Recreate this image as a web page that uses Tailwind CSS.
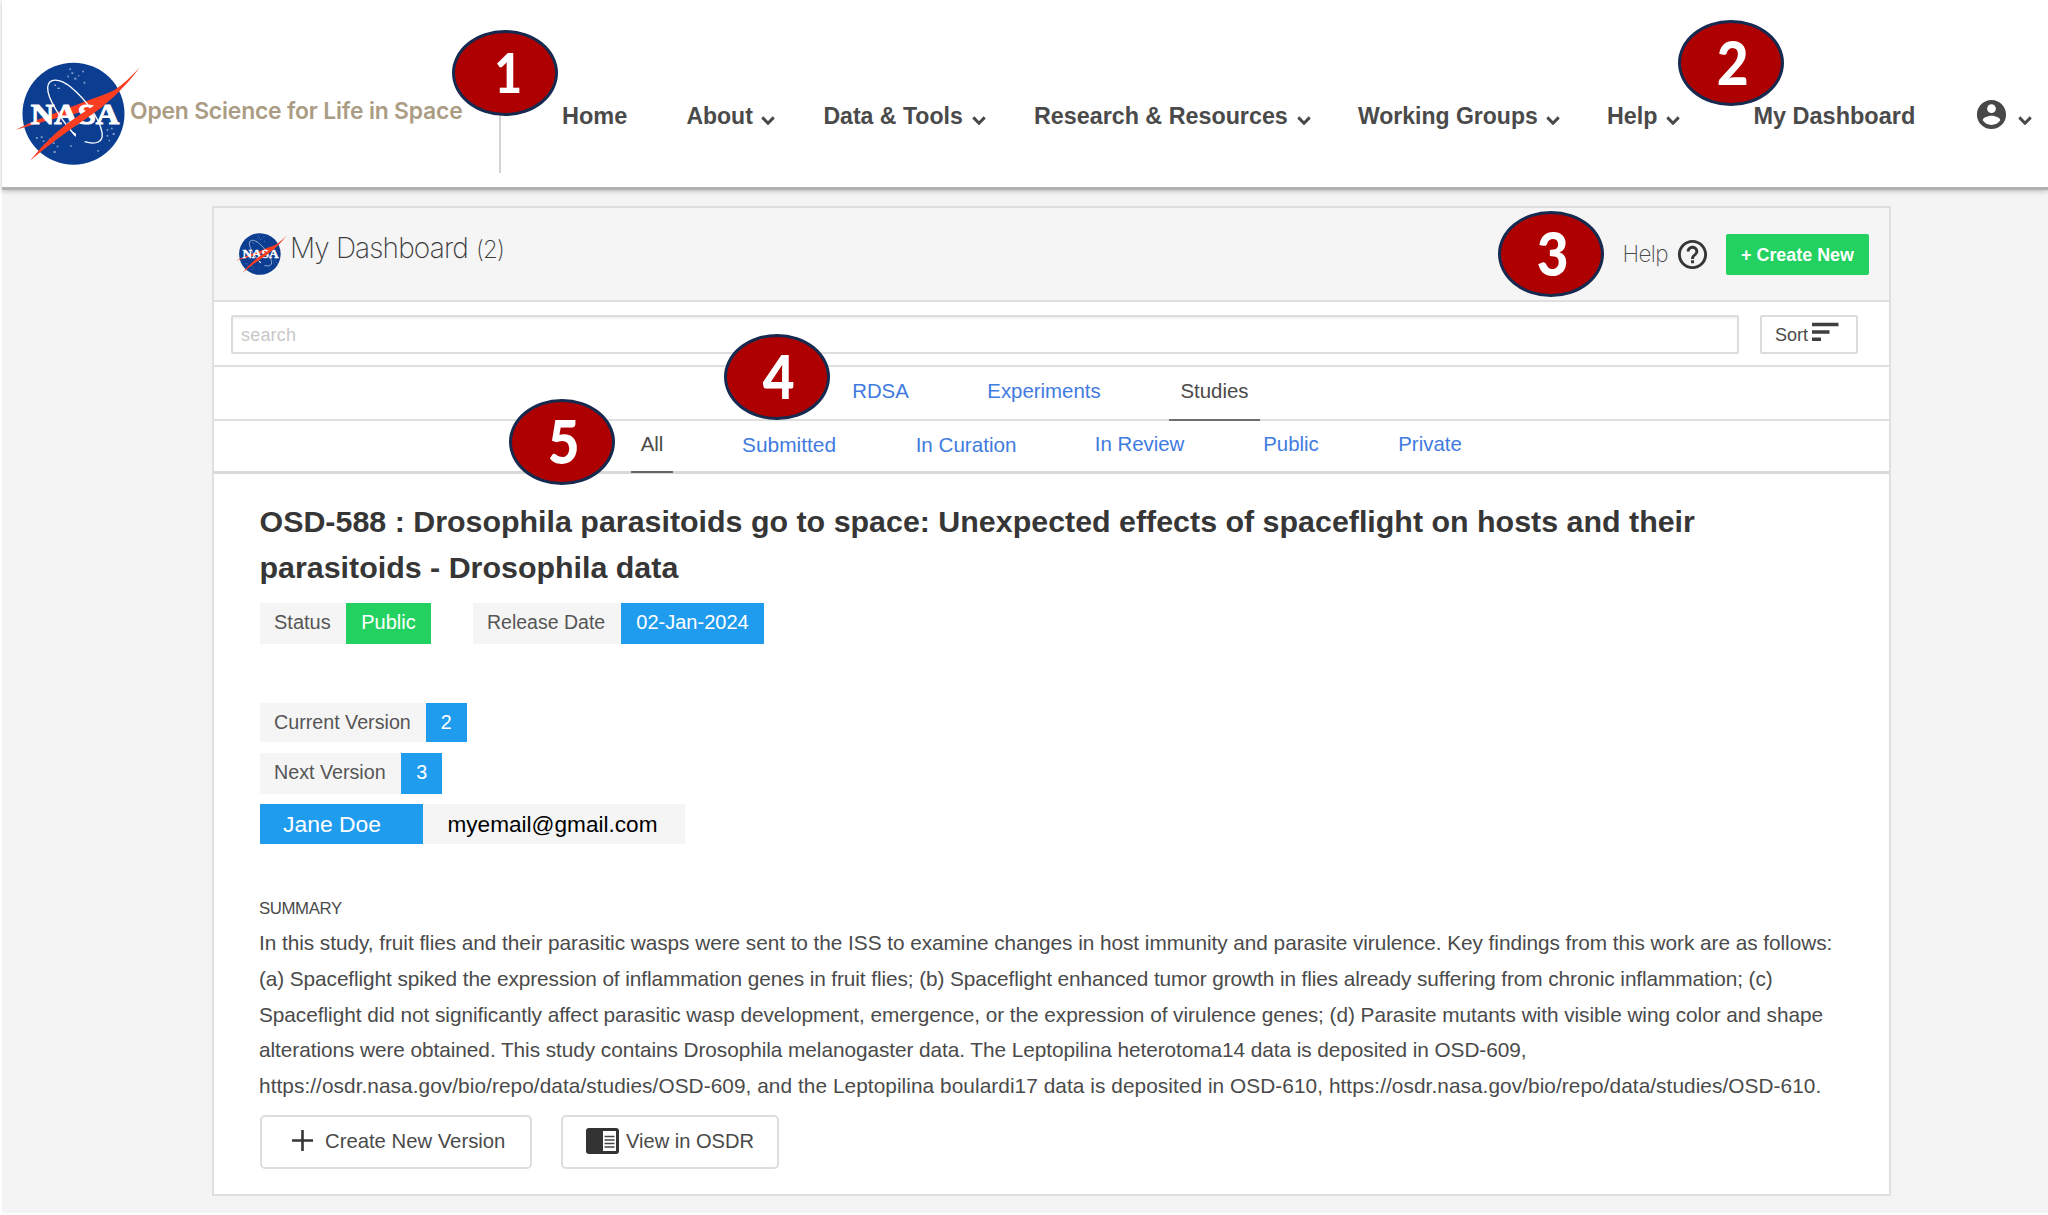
<!DOCTYPE html>
<html lang="en">
<head>
<meta charset="utf-8">
<title>My Dashboard</title>
<script src="https://cdn.jsdelivr.net/npm/@tailwindcss/browser@4"></script>
</head>
<body class="relative h-[1215px] w-[2048px] overflow-hidden bg-white pl-[2px] font-['Liberation_Sans',Arial,sans-serif] text-[#4a4a4a]">

<!-- Shared symbols -->
<svg class="hidden">
  <symbol id="nasa" viewBox="0 0 405 345">
    <circle cx="190.5" cy="176" r="153" fill="#0b3d91"/>
    <g fill="#fff" opacity=".5">
      <rect x="178" y="40" width="5" height="5"/><rect x="184" y="52" width="6" height="5"/><rect x="217" y="47" width="5" height="5"/><rect x="172" y="62" width="5" height="5"/><rect x="193" y="68" width="6" height="6"/><rect x="204" y="60" width="4" height="4"/><rect x="221" y="80" width="5" height="6"/><rect x="133" y="88" width="5" height="5"/><rect x="142" y="98" width="8" height="4"/><rect x="165" y="84" width="5" height="5"/>
      <rect x="78" y="246" width="5" height="6"/><rect x="92" y="244" width="6" height="5"/><rect x="98" y="256" width="5" height="5"/><rect x="118" y="250" width="4" height="5"/><rect x="128" y="262" width="6" height="5"/><rect x="140" y="272" width="5" height="5"/><rect x="131" y="288" width="6" height="6"/><rect x="181" y="270" width="4" height="6"/><rect x="290" y="222" width="5" height="5"/><rect x="303" y="218" width="5" height="5"/><rect x="290" y="240" width="5" height="5"/><rect x="308" y="234" width="6" height="6"/><rect x="296" y="254" width="4" height="5"/><rect x="262" y="285" width="5" height="5"/>
    </g>
    <path d="M389 38 Q350 92 285 118 Q245 132 214 144 L110 184 Q60 202 16 225 Q70 208 130 192 L236 166 Q330 118 389 38Z" fill="#fc3d21"/>
    <path d="M196 242 C150 190 112 130 113 98 C115 66 150 70 182 96 C228 134 268 190 276 232 C281 262 258 270 224 260" fill="none" stroke="#fff" stroke-width="4"/>
    <path d="M178 224 L198 236 L197 246 Z" fill="#fff"/>
    <text x="62" y="206" font-family="Liberation Serif, serif" font-weight="700" font-size="86" textLength="266" lengthAdjust="spacingAndGlyphs" fill="#fff" stroke="#fff" stroke-width="3">NASA</text>
    <path d="M389 38 Q320 130 230 190 Q140 250 60 317 Q130 228 214 176 Q320 112 389 38Z" fill="#fc3d21"/>
  </symbol>
  <symbol id="chev" viewBox="0 0 14 9"><path d="M1.3 1.4 7 7.2 12.7 1.4" fill="none" stroke="#484848" stroke-width="3"/></symbol>
</svg>

<header class="relative flex h-[190px] items-center border-b-[3px] border-[#b0b2b1] bg-white pt-[45px] text-[23px] font-bold text-[#4a4a4a] shadow-[0_1px_5px_rgba(0,0,0,0.25)]">
  <div class="mt-[-7px] ml-[8px] flex w-[489px] items-center">
    <svg class="h-[115px] w-[135px] shrink-0"><use href="#nasa"/></svg>
    <span class="-ml-[15px] mt-[-3px] whitespace-nowrap font-[Inter,sans-serif] text-[22.9px] font-semibold tracking-[-0.2px] text-[#ab9c84]">Open Science for Life in Space</span>
  </div>
  <div class="-mt-[1px] h-[114px] w-[63px] shrink-0 border-l-[2px] border-[#d3d3d3]"></div>
  <nav class="flex items-center whitespace-nowrap leading-[30px]">
    <a class="w-[124.4px] text-[23.5px]">Home</a>
    <a class="flex w-[137px] items-center gap-[8px]">About<svg class="mt-[9px] h-[9px] w-[14px]"><use href="#chev"/></svg></a>
    <a class="flex w-[210.6px] items-center gap-[9px] text-[23.1px]">Data &amp; Tools<svg class="mt-[9px] h-[9px] w-[14px]"><use href="#chev"/></svg></a>
    <a class="flex w-[324px] items-center gap-[9px] text-[23.3px]">Research &amp; Resources<svg class="mt-[9px] h-[9px] w-[14px]"><use href="#chev"/></svg></a>
    <a class="flex w-[249px] items-center gap-[8px]">Working Groups<svg class="mt-[9px] h-[9px] w-[14px]"><use href="#chev"/></svg></a>
    <a class="flex w-[146.4px] items-center gap-[9px] text-[23.3px]">Help<svg class="mt-[9px] h-[9px] w-[14px]"><use href="#chev"/></svg></a>
    <a class="w-[224px] text-[23.5px]">My Dashboard</a>
    <a class="flex items-center gap-[12px]">
      <svg class="-mt-[4px] -mr-[3px] -ml-[3px] h-[35px] w-[35px]" viewBox="0 0 24 24" fill="#484848"><path d="M12 2C6.48 2 2 6.48 2 12s4.48 10 10 10 10-4.48 10-10S17.52 2 12 2zm0 3c1.66 0 3 1.34 3 3s-1.34 3-3 3-3-1.34-3-3 1.34-3 3-3zm0 14.200c-2.500 0-4.710-1.280-6-3.220.03-1.990 4-3.080 6-3.080 1.990 0 5.970 1.090 6 3.080-1.290 1.940-3.500 3.220-6 3.220z"/></svg>
      <svg class="mt-[9px] h-[9px] w-[14px]"><use href="#chev"/></svg>
    </a>
  </nav>
</header>

<div class="h-[1023px] bg-[#f4f4f4] pt-[16px] pl-[210px]">
  <main class="flex h-[990px] w-[1679px] flex-col border-2 border-[#dfdfdf] bg-white">

    <div class="flex h-[94px] shrink-0 items-center border-b-2 border-[#dfdfdf] bg-[#f5f5f5] pl-[20px] pr-[20px]">
      <svg class="-mt-[2px] h-[47px] w-[55px]"><use href="#nasa"/></svg>
      <h1 class="-mt-[10px] ml-[1px] font-[Inter,sans-serif] text-[28px] font-extralight leading-[40px] tracking-[-0.85px] text-[#3c3c3c]">My Dashboard <span class="ml-[1px] text-[24px]">(2)</span></h1>
      <span class="ml-auto font-[Inter,sans-serif] text-[22.5px] font-extralight tracking-[-0.6px] text-[#4a4a4a]">Help</span>
      <svg class="ml-[7px] h-[35px] w-[35px]" viewBox="0 0 24 24" fill="#363636"><path d="M11 18h2v-2h-2v2zm1-16C6.480 2 2 6.480 2 12s4.480 10 10 10 10-4.480 10-10S17.520 2 12 2zm0 18c-4.410 0-8-3.590-8-8s3.590-8 8-8 8 3.590 8 8-3.590 8-8 8zm0-14c-2.210 0-4 1.790-4 4h2c0-1.100.9-2 2-2s2 .9 2 2c0 2-3 1.750-3 5h2c0-2.250 3-2.500 3-5 0-2.210-1.790-4-4-4z"/></svg>
      <button class="ml-[16px] h-[41px] w-[143px] rounded-[2px] bg-[#23d160] pt-[2px] text-[17.900px] font-bold text-white">+ Create New</button>
    </div>

    <div class="flex h-[65px] shrink-0 items-start gap-[21px] border-b-2 border-[#dfdfdf] pt-[13px] pl-[17px]">
      <div class="h-[39px] w-[1508px] rounded-[2px] border-2 border-[#dcdcdc] pl-[8px] text-[18px] leading-[37px] tracking-[0.200px] text-[#c8c8c8] shadow-[inset_0_2px_2px_rgba(10,10,10,0.05)]">search</div>
      <div class="flex h-[39px] w-[98px] rounded-[2px] border-2 border-[#dcdcdc] pl-[13px] text-[18px] leading-[37px]">Sort
        <svg class="mt-[5px] ml-[4px] h-[20px] w-[27px]" viewBox="0 0 27 20" fill="#3f3f3f"><path d="M0 .8h26.500v3.500H0zM0 8.200h17.500v3.500H0zM0 15.600h9v3.500H0z"/></svg>
      </div>
    </div>

    <div class="flex h-[54px] shrink-0 gap-[57px] border-b-2 border-[#dfdfdf] pl-[627px] text-center text-[20.4px] leading-[49px] text-[#3f7be0]">
      <a class="w-[78px] pl-[1px]">RDSA</a>
      <a class="w-[136px]">Experiments</a>
      <a class="h-[54px] w-[91px] border-b-2 border-[#6e6e6e] text-[#4a4a4a]">Studies</a>
    </div>

    <div class="flex h-[53px] shrink-0 gap-[58px] border-b-[3px] border-[#d9d9d9] pl-[417px] text-center text-[20.4px] leading-[47px] text-[#3f7be0]">
      <a class="h-[52px] w-[42px] border-b-2 border-[#666] text-[#4a4a4a]">All</a>
      <a class="w-[116px] text-[20.900px]">Submitted</a>
      <a class="w-[122px] text-[20.600px]">In Curation</a>
      <a class="w-[109px]">In Review</a>
      <a class="w-[78px]">Public</a>
      <a class="w-[84px]">Private</a>
    </div>

    <article class="flex flex-col items-start whitespace-nowrap pt-[25px] pl-[46px]">
      <h2 class="-ml-[0.500px] text-[30.4px] font-bold leading-[45.5px] text-[#363636]">OSD-588 : Drosophila parasitoids go to space: Unexpected effects of spaceflight on hosts and their<br>parasitoids - Drosophila data</h2>

      <div class="mt-[13px] flex text-[20px] leading-[39px]">
        <span class="h-[41px] w-[86px] bg-[#f5f5f5] pl-[14px] text-[#555]">Status</span>
        <span class="h-[41px] w-[85px] bg-[#23d160] text-center text-white">Public</span>
        <span class="ml-[42px] h-[41px] w-[148px] bg-[#f5f5f5] pl-[14px] text-[19.500px] text-[#555]">Release Date</span>
        <span class="h-[41px] w-[143px] bg-[#209cee] text-center text-white">02-Jan-2024</span>
      </div>
      <div class="mt-[59px] flex h-[39px] text-[19.700px] leading-[38px]">
        <span class="w-[166px] bg-[#f5f5f5] pl-[14px] text-[#555]">Current Version</span>
        <span class="w-[40.500px] bg-[#209cee] text-center text-white">2</span>
      </div>
      <div class="mt-[11px] flex h-[41px] text-[19.700px] leading-[38px]">
        <span class="w-[141.300px] bg-[#f5f5f5] pl-[14px] text-[#555]">Next Version</span>
        <span class="w-[41px] bg-[#209cee] text-center text-white">3</span>
      </div>
      <div class="mt-[10px] flex h-[40px] text-[22.600px] leading-[41px]">
        <span class="w-[163px] bg-[#209cee] pl-[23px] text-[22.900px] text-white">Jane Doe</span>
        <span class="w-[262px] bg-[#f5f5f5] pl-[24.500px] text-black">myemail@gmail.com</span>
      </div>

      <h3 class="mt-[54px] -ml-[1px] text-[16.800px] leading-[22px] tracking-[-0.4px]">SUMMARY</h3>
      <div class="mt-[5px] -ml-[1px] text-[20.800px] leading-[35.750px]">
        <p class="tracking-[-0.050px]">In this study, fruit flies and their parasitic wasps were sent to the ISS to examine changes in host immunity and parasite virulence. Key findings from this work are as follows:</p>
        <p class="tracking-[-0.090px]">(a) Spaceflight spiked the expression of inflammation genes in fruit flies; (b) Spaceflight enhanced tumor growth in flies already suffering from chronic inflammation; (c)</p>
        <p class="tracking-[-0.045px]">Spaceflight did not significantly affect parasitic wasp development, emergence, or the expression of virulence genes; (d) Parasite mutants with visible wing color and shape</p>
        <p class="tracking-[-0.060px]">alterations were obtained. This study contains Drosophila melanogaster data. The Leptopilina heterotoma14 data is deposited in OSD-609,</p>
        <p class="tracking-[0.065px]">https://osdr.nasa.gov/bio/repo/data/studies/OSD-609, and the Leptopilina boulardi17 data is deposited in OSD-610, https://osdr.nasa.gov/bio/repo/data/studies/OSD-610.</p>
      </div>

      <div class="mt-[11px] flex gap-[29px] text-[20.300px]">
        <button class="flex h-[54px] w-[272px] items-center rounded-[5px] border-2 border-[#dedede] pb-[2px] pl-[30px]">
          <svg class="h-[21px] w-[21px]" viewBox="0 0 21 21"><path d="M10.500 0v21M0 10.500h21" stroke="#363636" stroke-width="2.600"/></svg>
          <span class="ml-[12px]">Create New Version</span>
        </button>
        <button class="flex h-[54px] w-[218px] items-center rounded-[5px] border-2 border-[#dedede] pb-[2px] pl-[23px]">
          <svg class="h-[26px] w-[33px]" viewBox="0 0 33 26"><rect width="33" height="26" rx="3" fill="#333"/><rect x="17" y="3" width="13" height="20" fill="#fff"/><path d="M18.500 8.500h10M18.500 12h10M18.500 15.500h10M18.500 19h10" stroke="#444" stroke-width="1.600"/></svg>
          <span class="ml-[7px] text-[20.100px]">View in OSDR</span>
        </button>
      </div>
    </article>
  </main>
</div>

<!-- Numbered callouts laid over the page -->
<div class="absolute top-[30px] left-[452px] h-[86px] w-[106px] rounded-[50%] border-[3px] border-[#16294f] bg-[#ae0000] pl-[4px] text-center font-[Carlito,Lato,sans-serif] text-[61px] font-black leading-[78px] text-white"><span class="inline-block scale-x-90">1</span></div>
<div class="absolute top-[20px] left-[1678px] h-[86px] w-[106px] rounded-[50%] border-[3px] border-[#16294f] bg-[#ae0000] pl-[3px] text-center font-[Lato,sans-serif] text-[61px] font-black leading-[78px] text-white"><span class="inline-block scale-x-90">2</span></div>
<div class="absolute top-[211px] left-[1498px] h-[86px] w-[106px] rounded-[50%] border-[3px] border-[#16294f] bg-[#ae0000] pl-[3px] text-center font-[Lato,sans-serif] text-[61px] font-black leading-[78px] text-white"><span class="inline-block scale-x-90">3</span></div>
<div class="absolute top-[334px] left-[724px] h-[86px] w-[106px] rounded-[50%] border-[3px] border-[#16294f] bg-[#ae0000] pl-[3px] text-center font-[Lato,sans-serif] text-[61px] font-black leading-[78px] text-white"><span class="inline-block scale-x-90">4</span></div>
<div class="absolute top-[399px] left-[509px] h-[86px] w-[106px] rounded-[50%] border-[3px] border-[#16294f] bg-[#ae0000] pl-[3px] text-center font-[Lato,sans-serif] text-[61px] font-black leading-[78px] text-white"><span class="inline-block scale-x-90">5</span></div>
</body>
</html>
